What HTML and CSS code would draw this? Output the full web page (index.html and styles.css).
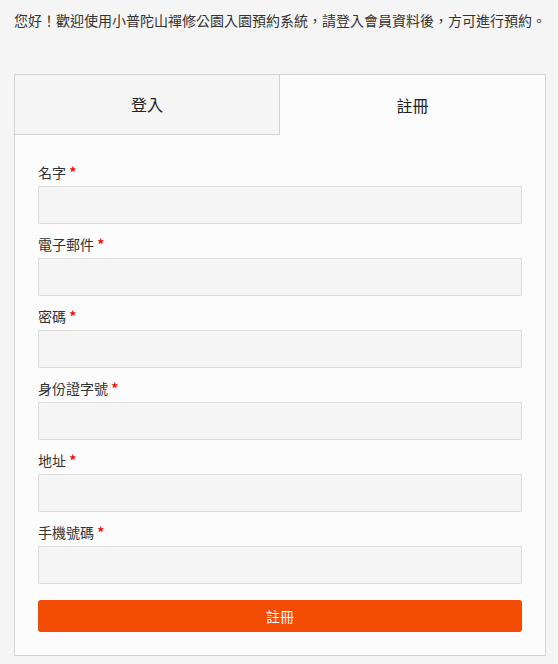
FILE: index.html
```html
<!DOCTYPE html>
<html lang="zh-Hant">
<head>
<meta charset="utf-8">
<title>註冊</title>
<link rel="stylesheet" href="styles.css">
</head>
<body>
<p class="intro">您好！歡迎使用小普陀山禪修公園入園預約系統，請登入會員資料後，方可進行預約。</p>
<div class="card">
  <div class="tabs">
    <div class="tab tab-inactive">登入</div>
    <div class="tab tab-active">註冊</div>
  </div>
  <form class="form">
    <div class="field">
      <label class="label">名字 <span class="req">*</span></label>
      <input class="input" type="text">
    </div>
    <div class="field">
      <label class="label">電子郵件 <span class="req">*</span></label>
      <input class="input" type="text">
    </div>
    <div class="field">
      <label class="label">密碼 <span class="req">*</span></label>
      <input class="input" type="password">
    </div>
    <div class="field">
      <label class="label">身份證字號 <span class="req">*</span></label>
      <input class="input" type="text">
    </div>
    <div class="field">
      <label class="label">地址 <span class="req">*</span></label>
      <input class="input" type="text">
    </div>
    <div class="field">
      <label class="label">手機號碼 <span class="req">*</span></label>
      <input class="input" type="text">
    </div>
    <button class="btn" type="button">註冊</button>
  </form>
</div>
</body>
</html>
```

FILE: styles.css
```css
* { box-sizing: border-box; }
html, body { margin: 0; padding: 0; }
body {
  background: #f5f5f5;
  font-family: "Noto Sans CJK TC", "Noto Sans", sans-serif;
  color: #333;
  font-size: 14px;
}
.intro {
  margin: 0;
  padding: 10px 14px 0;
  line-height: 20px;
  font-size: 14px;
  color: #333;
  white-space: nowrap;
}
.card {
  margin: 44px 12px 0 14px;
  background: #fcfcfc;
  border: 1px solid #d2d2d2;
}
.tabs {
  display: grid;
  grid-template-columns: 1fr 1fr;
  height: 60px;
}
.tab {
  display: flex;
  align-items: center;
  justify-content: center;
  font-size: 16px;
  color: #222;
  padding-bottom: 1px;
}
.tab-inactive {
  background: #f5f5f5;
  border-right: 1px solid #d2d2d2;
  border-bottom: 1px solid #d2d2d2;
}
.tab-active {
  background: #fcfcfc;
}
.form {
  display: flex;
  flex-direction: column;
  padding: 27px 23px 23px;
}
.field {
  display: flex;
  flex-direction: column;
  margin-bottom: 10px;
}
.label {
  line-height: 20px;
  font-size: 14px;
  color: #333;
  margin-bottom: 4px;
}
.req {
  color: #e8110f;
  font-weight: bold;
}
.input {
  height: 38px;
  background: #f5f5f5;
  border: 1px solid #dcdcdc;
  border-radius: 2px;
  font-size: 14px;
  padding: 0 10px;
}
.btn {
  margin-top: 6px;
  height: 32px;
  background: #f24c05;
  color: #fff;
  border: none;
  border-radius: 3px;
  font-family: inherit;
  font-size: 14px;
  cursor: pointer;
}
```
